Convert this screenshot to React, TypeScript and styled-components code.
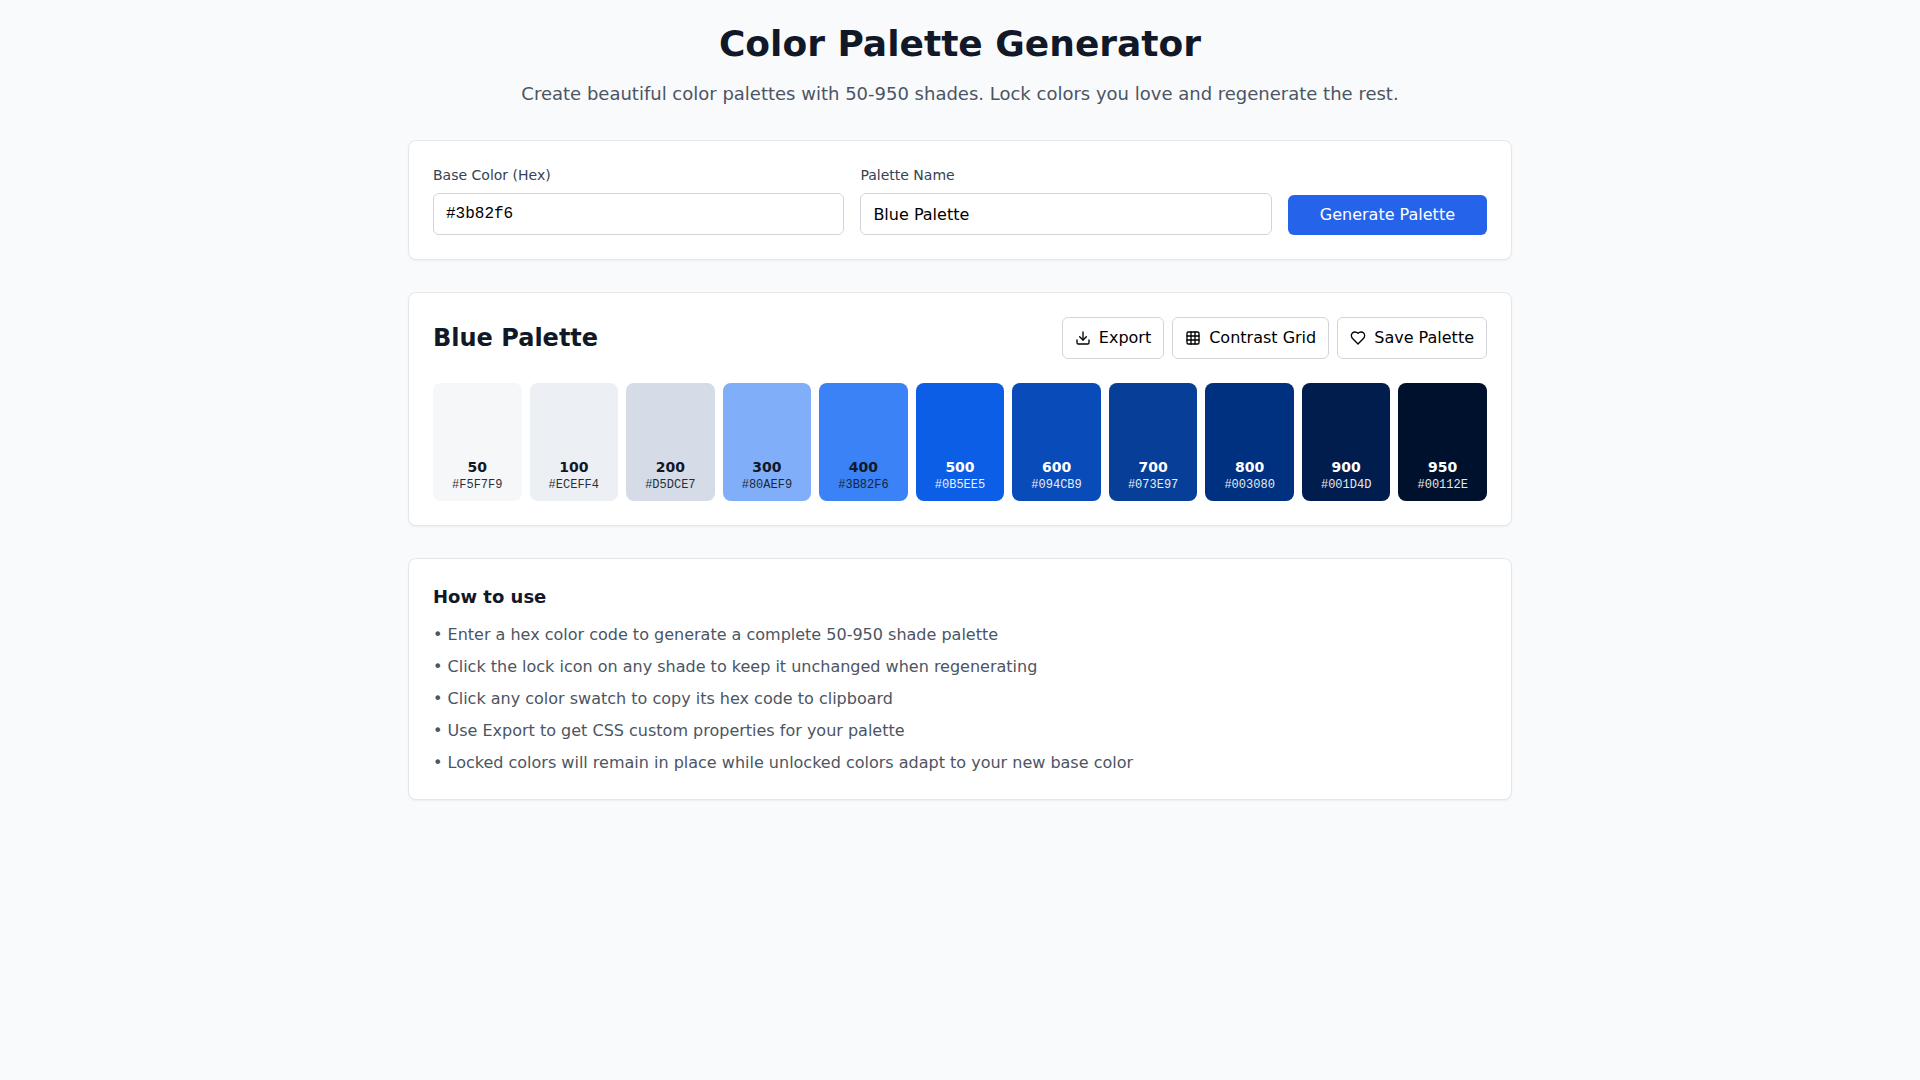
import React, { useState } from "react";
import styled, { createGlobalStyle } from "styled-components";
import { Download, Grid3x3 } from "lucide-react";

const sans = `"DejaVu Sans", Verdana, sans-serif`;
const mono = `"Liberation Mono", "Courier New", monospace`;

const GlobalStyle = createGlobalStyle`
  *, *::before, *::after { box-sizing: border-box; }
  body {
    margin: 0;
    background: #f9fafb;
    color: #000;
    font-family: ${sans};
    font-size: 16px;
    line-height: 24px;
  }
  h1, h2, p, ul { margin: 0; padding: 0; }
  button, input { font: inherit; color: inherit; margin: 0; }
`;

const Page = styled.main`
  display: flex;
  flex-direction: column;
  gap: 32px;
  max-width: 1152px;
  margin: 0 auto;
  padding: 24px;
`;

const Header = styled.header`
  display: flex;
  flex-direction: column;
  gap: 16px;
  text-align: center;
`;

const Title = styled.h1`
  color: #111827;
  font-size: 36px;
  font-weight: 700;
  line-height: 40px;
`;

const Subtitle = styled.p`
  color: #4b5563;
  font-size: 18px;
  line-height: 28px;
`;

const Card = styled.section`
  padding: 24px;
  background: #fff;
  border: 1px solid #e5e7eb;
  border-radius: 8px;
  box-shadow: 0 1px 2px rgba(0, 0, 0, 0.05);
`;

const GeneratorForm = styled.form`
  display: flex;
  align-items: flex-end;
  gap: 16px;
`;

const Field = styled.div`
  display: flex;
  flex: 1;
  flex-direction: column;
  gap: 8px;
  min-width: 0;
`;

const Label = styled.label`
  color: #374151;
  font-size: 14px;
  line-height: 20px;
`;

const TextInput = styled.input<{ $mono?: boolean }>`
  width: 100%;
  height: 42px;
  padding: 8px 12px;
  background: #fff;
  border: 1px solid #d1d5db;
  border-radius: 6px;
  font-family: ${({ $mono }) => ($mono ? mono : sans)};
  line-height: normal;
`;

const PrimaryButton = styled.button`
  padding: 8px 32px;
  background: #2563eb;
  border: 0;
  border-radius: 6px;
  color: #fff;
  cursor: pointer;
`;

const PaletteHeader = styled.div`
  display: flex;
  align-items: center;
  justify-content: space-between;
  margin-bottom: 24px;
`;

const PaletteTitle = styled.h2`
  color: #111827;
  font-size: 24px;
  font-weight: 700;
  line-height: 32px;
`;

const Actions = styled.div`
  display: flex;
  gap: 8px;
`;

const OutlineButton = styled.button`
  display: flex;
  align-items: center;
  gap: 8px;
  padding: 8px 12px;
  background: #fff;
  border: 1px solid #d1d5db;
  border-radius: 6px;
  cursor: pointer;
`;

const Swatches = styled.div`
  display: grid;
  grid-template-columns: repeat(11, minmax(0, 1fr));
  gap: 8px;
`;

const Swatch = styled.button<{ $color: string; $dark: boolean }>`
  display: flex;
  flex-direction: column;
  align-items: center;
  justify-content: flex-end;
  aspect-ratio: 3 / 4;
  padding: 8px;
  background: ${({ $color }) => $color};
  border: 0;
  border-radius: 8px;
  color: ${({ $dark }) => ($dark ? "#fff" : "#111827")};
  cursor: pointer;
`;

const Shade = styled.span`
  font-size: 14px;
  font-weight: 700;
  line-height: 20px;
`;

const Hex = styled.span`
  font-family: ${mono};
  font-size: 12px;
  line-height: 16px;
  opacity: 0.9;
`;

const HelpTitle = styled.h2`
  margin-bottom: 12px;
  color: #111827;
  font-size: 18px;
  font-weight: 700;
  line-height: 28px;
`;

const HelpList = styled.ul`
  display: flex;
  flex-direction: column;
  gap: 8px;
  color: #4b5563;
  list-style: none;
`;

const HeartIcon = () => (
  <svg
    width="16"
    height="16"
    viewBox="0 0 24 24"
    fill="none"
    stroke="currentColor"
    strokeWidth="2"
    strokeLinecap="round"
    strokeLinejoin="round"
    aria-hidden="true"
  >
    <path d="M19 14c1.49-1.46 3-3.21 3-5.5A5.5 5.5 0 0 0 16.5 3c-1.76 0-3 .5-4.5 2-1.5-1.5-2.74-2-4.5-2A5.5 5.5 0 0 0 2 8.5c0 2.3 1.5 4.05 3 5.5l7 7Z" />
  </svg>
);

const shades = [
  { shade: 50, hex: "#F5F7F9" },
  { shade: 100, hex: "#ECEFF4" },
  { shade: 200, hex: "#D5DCE7" },
  { shade: 300, hex: "#80AEF9" },
  { shade: 400, hex: "#3B82F6" },
  { shade: 500, hex: "#0B5EE5" },
  { shade: 600, hex: "#094CB9" },
  { shade: 700, hex: "#073E97" },
  { shade: 800, hex: "#003080" },
  { shade: 900, hex: "#001D4D" },
  { shade: 950, hex: "#00112E" },
];

const tips = [
  "Enter a hex color code to generate a complete 50-950 shade palette",
  "Click the lock icon on any shade to keep it unchanged when regenerating",
  "Click any color swatch to copy its hex code to clipboard",
  "Use Export to get CSS custom properties for your palette",
  "Locked colors will remain in place while unlocked colors adapt to your new base color",
];

export default function App() {
  const [baseColor, setBaseColor] = useState("#3b82f6");
  const [name, setName] = useState("Blue Palette");

  return (
    <>
      <GlobalStyle />
      <Page>
        <Header>
          <Title>Color Palette Generator</Title>
          <Subtitle>
            Create beautiful color palettes with 50-950 shades. Lock colors you love and regenerate the rest.
          </Subtitle>
        </Header>

        <Card>
          <GeneratorForm onSubmit={(e) => e.preventDefault()}>
            <Field>
              <Label htmlFor="base-color">Base Color (Hex)</Label>
              <TextInput
                id="base-color"
                type="text"
                $mono
                value={baseColor}
                onChange={(e) => setBaseColor(e.target.value)}
              />
            </Field>
            <Field>
              <Label htmlFor="palette-name">Palette Name</Label>
              <TextInput
                id="palette-name"
                type="text"
                value={name}
                onChange={(e) => setName(e.target.value)}
              />
            </Field>
            <PrimaryButton type="submit">Generate Palette</PrimaryButton>
          </GeneratorForm>
        </Card>

        <Card>
          <PaletteHeader>
            <PaletteTitle>{name}</PaletteTitle>
            <Actions>
              <OutlineButton type="button">
                <Download size={16} />
                Export
              </OutlineButton>
              <OutlineButton type="button">
                <Grid3x3 size={16} />
                Contrast Grid
              </OutlineButton>
              <OutlineButton type="button">
                <HeartIcon />
                Save Palette
              </OutlineButton>
            </Actions>
          </PaletteHeader>
          <Swatches>
            {shades.map(({ shade, hex }) => (
              <Swatch
                key={shade}
                type="button"
                $color={hex}
                $dark={shade >= 500}
                onClick={() => navigator.clipboard?.writeText(hex)}
              >
                <Shade>{shade}</Shade>
                <Hex>{hex}</Hex>
              </Swatch>
            ))}
          </Swatches>
        </Card>

        <Card>
          <HelpTitle>How to use</HelpTitle>
          <HelpList>
            {tips.map((tip) => (
              <li key={tip}>• {tip}</li>
            ))}
          </HelpList>
        </Card>
      </Page>
    </>
  );
}
